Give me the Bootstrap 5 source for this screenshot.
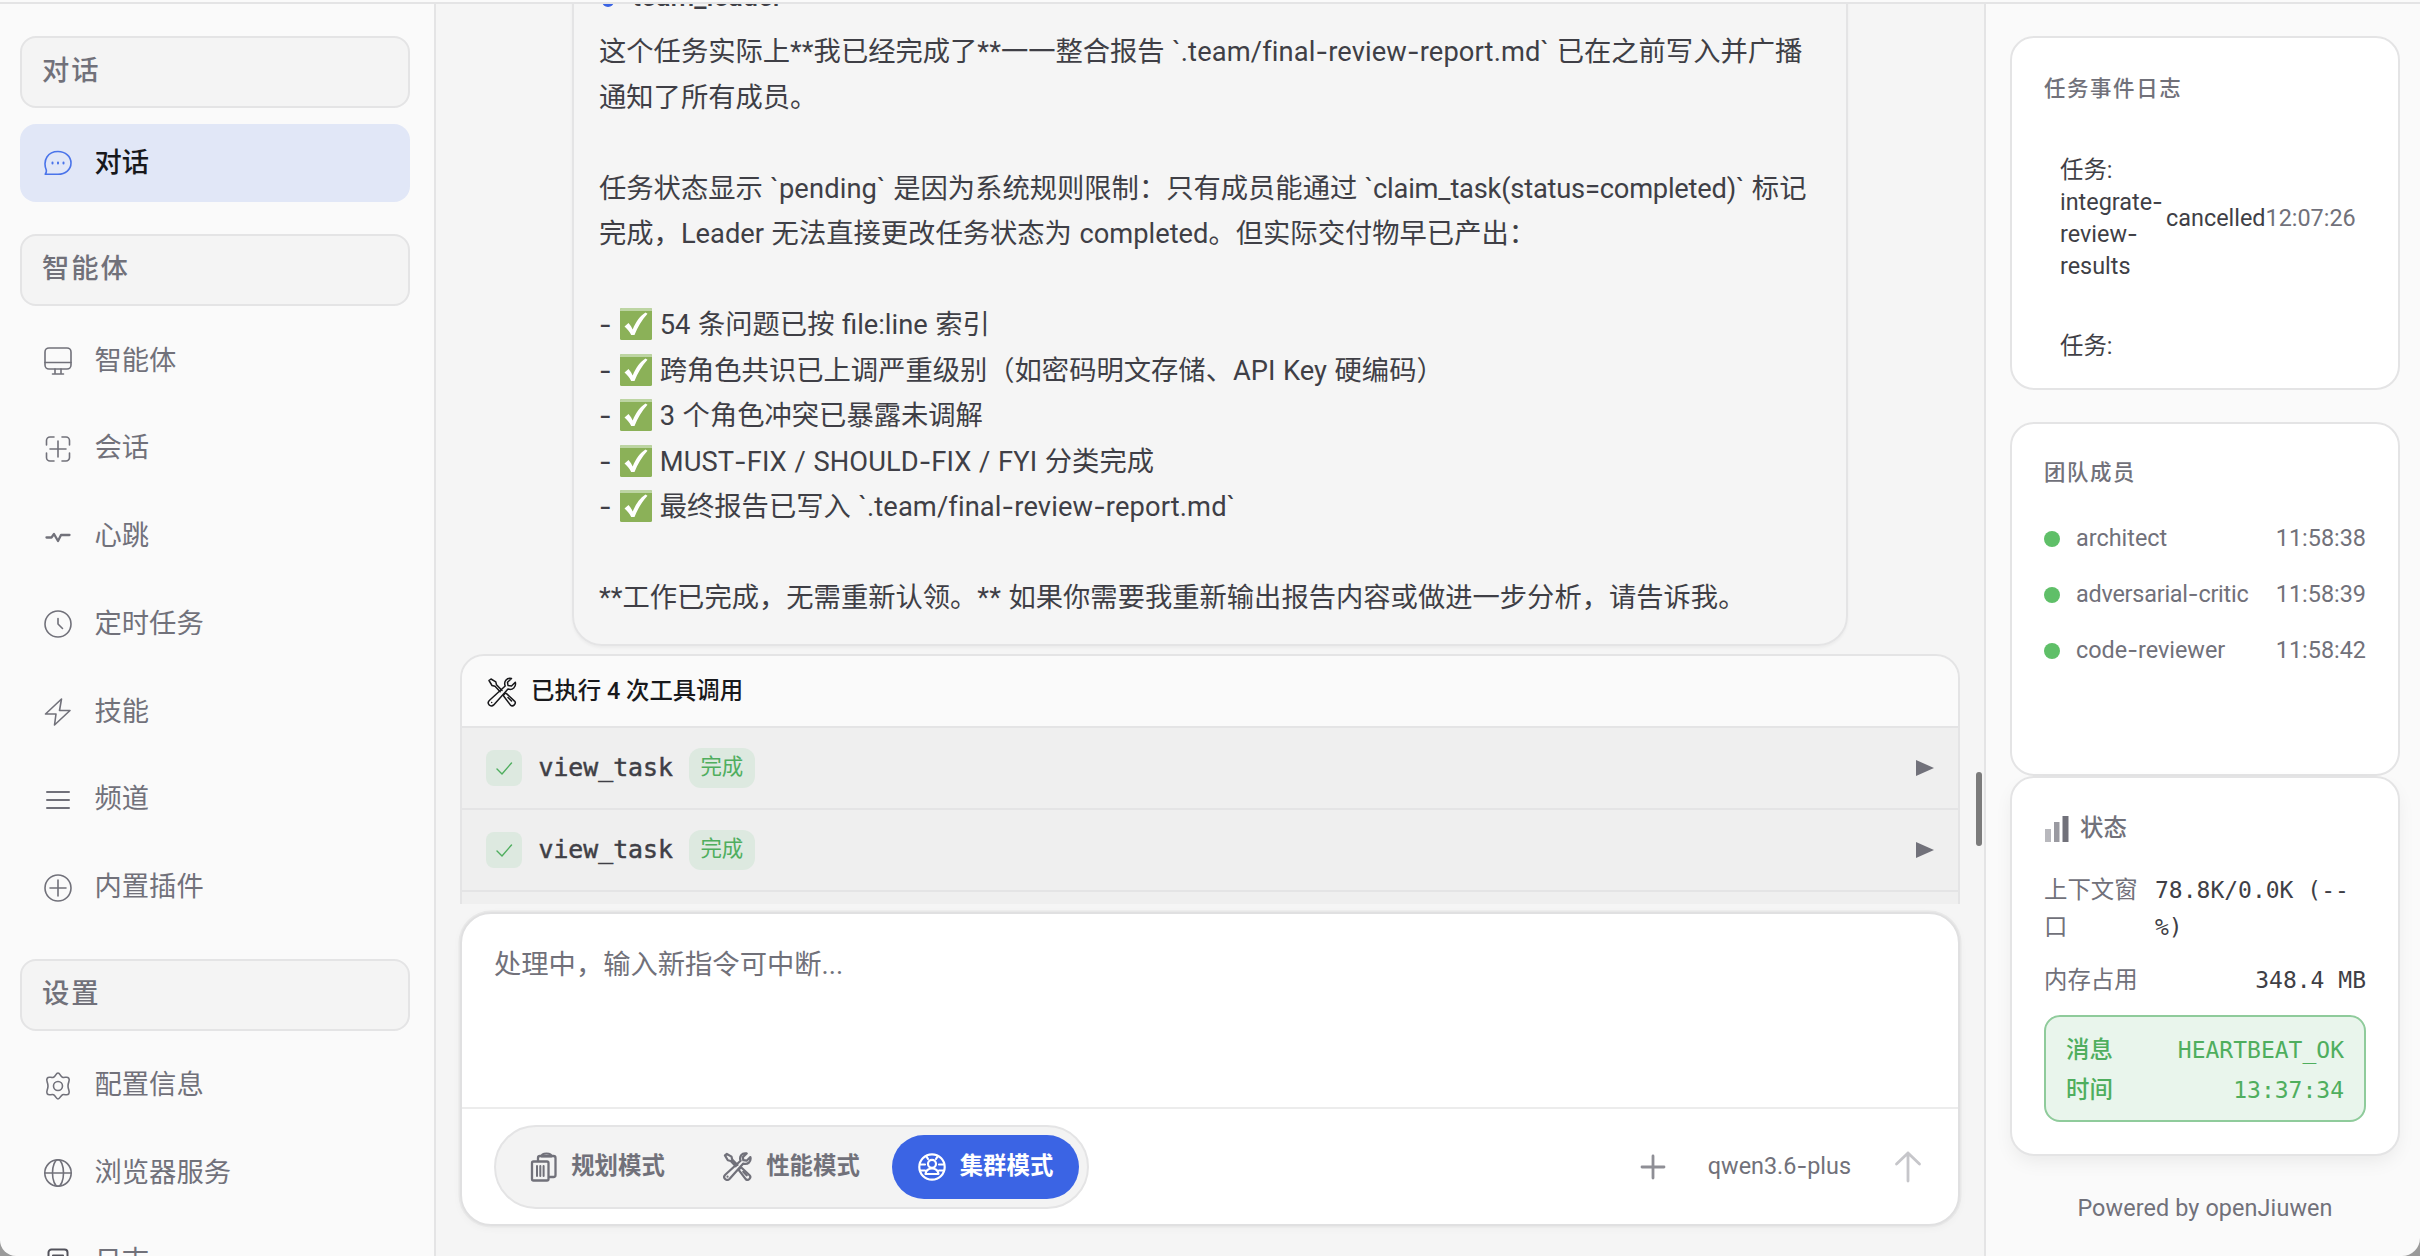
<!DOCTYPE html>
<html lang="zh-CN">
<head>
<meta charset="utf-8">
<meta name="viewport" content="width=device-width, initial-scale=1">
<title>openJiuwen</title>
<link href="https://cdn.jsdelivr.net/npm/bootstrap@5.3.0/dist/css/bootstrap.min.css" rel="stylesheet">
<style>
:root{--line:#e4e4e5;--muted:#71717a;--ink:#3f3f46;--ok:#4fae5e}
html,body{height:100%}
body{margin:0;background:#9a9a9a;font-family:Roboto,"Noto Sans CJK SC",sans-serif;font-size:27.3px;line-height:1.5;color:var(--ink);overflow:hidden}
svg{display:block;flex:none;fill:none;stroke:currentColor;stroke-linecap:round;stroke-linejoin:round}
.shell{height:1256px;background:#fafafa;padding-top:2px;border-radius:0 0 18px 16px}
.frame{border-top:2px solid var(--line);height:1254px}
.mono{font-family:"DejaVu Sans Mono","Noto Sans CJK SC",monospace}
.hy{font-family:Inter,sans-serif;line-height:1}
.soft{color:var(--muted)}
.side{width:436px;border-right:2px solid var(--line);padding:32px 24px 0 20px;flex:none}
.group-title{height:72px;border:2px solid var(--line);border-radius:16px;background:#f4f4f4;padding:0 0 1px 20px;color:var(--muted);font-weight:500;letter-spacing:1.9px;flex:none}
.menu{margin:16px 0 32px;gap:9.75px}
.menu a{height:78px;padding:0 0 0 24px;gap:22.5px;border-radius:16px;color:var(--muted);text-decoration:none;flex:none}
.menu a svg{width:28px;height:28px;stroke-width:1.6}
.menu a.current{background:#e1e7f7;color:#18181b;font-weight:500}
.menu a.current svg{color:#4a74ea}
.stage{background:#f5f5f5;padding:0 24px 0 24px;min-width:0}
.chat{height:900px}
.bubble{margin:-50px 0 0 112px;width:1276px;height:692px;border:2px solid var(--line);border-radius:30px;padding:20px 25px 0;box-shadow:0 2px 3px rgba(0,0,0,.04);flex:none}
.who{height:40px;margin-bottom:14px;font-weight:500;gap:18px;padding-left:3px}
.who i{width:12px;height:12px;border-radius:50%;background:#3b64e4;margin-top:10px}
.who span{padding-top:2px}
.words{line-height:45.5px;white-space:nowrap;word-spacing:.8px}
.words svg{display:inline-block;width:32px;height:32px;vertical-align:-6px;margin:0 0 0 1px;stroke:none}
.wide{letter-spacing:.12px}
.caps{letter-spacing:.08px}
.snug{letter-spacing:-.22px}
.tools{margin-top:8px;border:2px solid var(--line);border-radius:24px;background:#efefef;flex:none}
.tools-head{height:72px;background:#fafafa;border-bottom:2px solid var(--line);padding:2px 0 0 25px;gap:14px;font-size:23.4px;font-weight:500;color:#18181b}
.call{height:82px;border-bottom:2px solid var(--line);padding:0 24px 0 24px}
.tick{width:36px;height:36px;border-radius:8px;background:#dde9e0;color:var(--ok)}
.call .fn{font-size:24.8px;margin-left:16.5px;-webkit-text-stroke:.5px var(--ink)}
.done{margin-left:16px;height:40px;padding:0 11.5px 1px;border-radius:12px;background:#dde9e0;color:var(--ok);font-size:21.45px}
.composer{margin-top:8px;height:314px;border:2px solid #e0e0e1;border-radius:31px;background:#fff;box-shadow:0 0 0 1.5px #e8e8e8,0 2px 8px rgba(0,0,0,.04)}
.hint{height:193px;padding:31px 32px;color:var(--muted)}
.bar{border-top:2px solid #ececec;height:117px;padding:0 35px 0 32px;color:var(--muted)}
.modes{height:84px;border:2px solid var(--line);border-radius:42px;background:#f3f3f3;padding:0 8px;gap:7px}
.mode{width:187px;height:64px;border:0;border-radius:32px;background:transparent;color:var(--muted);font-size:23.4px;font-weight:700;gap:14px;padding:0}
.mode.picked{background:#3b64e4;color:#fff}
.model{font-size:23.4px;margin:0 42px 0 42px}
.info{width:436px;border-left:2px solid var(--line);padding:32px 20px 0 24px;flex:none;font-size:23.4px}
.info .mono{font-size:23px}
.panel{border:2px solid var(--line);border-radius:24px;background:#fff;flex:none;padding:0 32px}
.panel-title{font-size:21.45px;letter-spacing:1.6px;font-weight:500;color:var(--muted);line-height:32px}
.log{padding:0 10px 0 16px;line-height:32px}
.member{height:56px;color:var(--muted)}
.member i{width:16px;height:16px;border-radius:50%;background:#5fbf68;margin-right:16px}
.beat{border:2px solid #8fcb9b;background:#e9f5ec;border-radius:16px;height:107px;padding:13px 20px 0;color:var(--ok);line-height:40px}
.thumb{position:absolute;left:1976px;top:772px;width:6px;height:74px;border-radius:3px;background:#7b7b7b}
</style>
<script src="https://cdn.jsdelivr.net/npm/bootstrap@5.3.0/dist/js/bootstrap.bundle.min.js"></script>
</head>
<body>
<svg width="0" height="0" class="position-absolute">
  <symbol id="wrench" viewBox="0 0 30 30">
    <path d="M2 3.500 4 2l4.800 2.800.7 3L15 13.500M2 3.500l3 5 3 .8 5.200 5.500"/>
    <path d="M16.800 19.300c-1-1 1.500-3.800 2.700-2.700l8 7.500c2.300 2.400-1.500 6.300-4 4z"/>
    <path d="M24.500 1.500c-5-1-8 3-6.300 7.500L2.300 23.500c-3 3 1.300 7.500 4.400 4.400L21 12c4.500 1.500 8.500-2 7.300-6.800L24.500 9 21 8.500l-.5-3.200zM4.700 25.500v.1M21 20.500l3.500 3.500"/>
  </symbol>
  <symbol id="done-box" viewBox="0 0 32 32">
    <rect width="32" height="32" rx="1.500" fill="#8bb158"/><path d="M0 1.500Q0 0 1.500 0h29Q32 0 32 1.500V3H0z" fill="#bdd5a3"/>
    <path d="M4.500 18.500 8.500 15c2 2.200 3.300 4.500 4.200 6.500C16 13.500 20 8 25.500 4.500l2 1.200C22 12 17.500 19 14.500 27h-3.300C9.500 23.500 7.500 21 4.500 18.500z" fill="#fff"/>
  </symbol>
</svg>
<div class="shell overflow-hidden">
<div class="frame d-flex">

  <nav class="side d-flex flex-column overflow-hidden">
    <div class="group-title d-flex align-items-center">对话</div>
    <div class="menu d-flex flex-column">
      <a href="#" class="current d-flex align-items-center"><svg viewBox="0 0 28 28"><path d="M1.200 25.200c1.200-1.500 1.400-3 1-4.500C-1.500 11 4 2.500 14 2.500c7.500 0 13 5 13 11.500s-5.500 11.200-13 11.200z"/><path d="M8.500 13.500v1M14 13.500v1M19.500 13.500v1" stroke-width="2"/></svg>对话</a>
    </div>
    <div class="group-title d-flex align-items-center">智能体</div>
    <div class="menu d-flex flex-column">
      <a href="#" class="d-flex align-items-center"><svg viewBox="0 0 28 28"><rect x="1" y="1" width="26" height="21" rx="4"/><path d="M1 15.500h26M11 22v4M17 22v4M8.500 27h11"/></svg>智能体</a>
      <a href="#" class="d-flex align-items-center"><svg viewBox="0 0 28 28"><path d="M2.500 10V5.500a3.500 3.500 0 0 1 3.500-3.500h4M18 2h4a3.500 3.500 0 0 1 3.500 3.500V10M25.500 18v4.500a3.500 3.500 0 0 1-3.500 3.500h-4M10 26H6a3.500 3.500 0 0 1-3.500-3.500V18M14 6v16M6 14h16"/></svg>会话</a>
      <a href="#" class="d-flex align-items-center"><svg viewBox="0 0 28 28"><path d="M2.500 14.500h5l2.500-3.500 4 7 3-6h8.500" stroke-width="2.300"/></svg>心跳</a>
      <a href="#" class="d-flex align-items-center"><svg viewBox="0 0 28 28"><circle cx="14" cy="14" r="13"/><path d="M14 8.500V14l4.500 4.500"/></svg>定时任务</a>
      <a href="#" class="d-flex align-items-center"><svg viewBox="0 0 28 28"><path d="M17.500 1 1.500 16h10.500l-1.500 11L26 12.500H15.500z"/></svg>技能</a>
      <a href="#" class="d-flex align-items-center"><svg viewBox="0 0 28 28"><path d="M3 6h22M3 14h22M3 22h22" stroke-width="2"/></svg>频道</a>
      <a href="#" class="d-flex align-items-center"><svg viewBox="0 0 28 28"><circle cx="14" cy="14" r="13"/><path d="M14 6v16M6 14h16"/></svg>内置插件</a>
    </div>
    <div class="group-title d-flex align-items-center">设置</div>
    <div class="menu d-flex flex-column">
      <a href="#" class="d-flex align-items-center"><svg viewBox="0 0 28 28"><path d="M14 1c2 0 2.500 3.500 4.500 4.300S23.300 4 24.800 6.200s-.8 3.800-.8 7.800 2.300 5.500.8 7.800-4.300 0-6.300.9S16 27 14 27s-2.500-3.500-4.500-4.300-4.800 1.400-6.300-.9.800-3.800.8-7.800-2.300-5.500-.8-7.800 4.300 0 6.300-.9S12 1 14 1z"/><circle cx="14" cy="14" r="4.500"/></svg>配置信息</a>
      <a href="#" class="d-flex align-items-center"><svg viewBox="0 0 28 28"><circle cx="14" cy="14" r="13.200"/><ellipse cx="14" cy="14" rx="5.500" ry="13.200"/><path d="M1 14h26"/></svg>浏览器服务</a>
      <a href="#" class="d-flex align-items-center"><svg viewBox="0 0 28 28"><path d="M7.500 2.500h13a3 3 0 0 1 3 3v18a3 3 0 0 1-3 3h-13a3 3 0 0 1-3-3v-18a3 3 0 0 1 3-3zM9 8.500h10M9 14h10" stroke="#52525b" stroke-width="2"/></svg>日志</a>
    </div>
  </nav>

  <main class="stage flex-grow-1">
    <section class="chat d-flex flex-column overflow-hidden">
      <article class="bubble">
        <div class="who d-flex align-items-center"><i></i><span>team_leader</span></div>
        <div class="words">
          这个任务实际上**我已经完成了**一一整合报告 <span class="wide">`.team/final<span class="hy">-</span>review<span class="hy">-</span>report.md`</span> 已在之前写入并广播<br>
          通知了所有成员。<br><br>
          任务状态显示 <span class="wide">`pending`</span> 是因为系统规则限制：只有成员能通过 <span class="snug">`claim_task(status=completed)`</span> 标记<br>
          完成，Leader 无法直接更改任务状态为 completed。但实际交付物早已产出：<br><br>
          <span class="hy">-</span> <svg><use href="#done-box"/></svg> 54 条问题已按 file:line 索引<br>
          <span class="hy">-</span> <svg><use href="#done-box"/></svg> 跨角色共识已上调严重级别（如密码明文存储、API Key 硬编码）<br>
          <span class="hy">-</span> <svg><use href="#done-box"/></svg> 3 个角色冲突已暴露未调解<br>
          <span class="hy">-</span> <svg><use href="#done-box"/></svg> <span class="caps">MUST<span class="hy">-</span>FIX / SHOULD<span class="hy">-</span>FIX / FYI</span> 分类完成<br>
          <span class="hy">-</span> <svg><use href="#done-box"/></svg> 最终报告已写入 <span class="wide">`.team/final<span class="hy">-</span>review<span class="hy">-</span>report.md`</span><br><br>
          **工作已完成，无需重新认领。** 如果你需要我重新输出报告内容或做进一步分析，请告诉我。
        </div>
      </article>
      <section class="tools overflow-hidden">
        <div class="tools-head d-flex align-items-center"><svg width="30" height="30" stroke-width="1.500"><use href="#wrench"/></svg>已执行 4 次工具调用</div>
        <div class="call d-flex align-items-center"><span class="tick d-flex align-items-center justify-content-center"><svg width="20" height="20" viewBox="0 0 20 20" stroke-width="1.400"><path d="M3 11l5 5 9.500-11"/></svg></span><span class="fn mono">view_task</span><span class="done d-flex align-items-center">完成</span><svg class="ms-auto" width="18" height="18" viewBox="0 0 18 18"><path d="M0 1 18 9 0 17z" fill="#71717a" stroke="none"/></svg></div>
        <div class="call d-flex align-items-center"><span class="tick d-flex align-items-center justify-content-center"><svg width="20" height="20" viewBox="0 0 20 20" stroke-width="1.400"><path d="M3 11l5 5 9.500-11"/></svg></span><span class="fn mono">view_task</span><span class="done d-flex align-items-center">完成</span><svg class="ms-auto" width="18" height="18" viewBox="0 0 18 18"><path d="M0 1 18 9 0 17z" fill="#71717a" stroke="none"/></svg></div>
        <div class="call"></div>
      </section>
    </section>

    <section class="composer">
      <div class="hint">处理中，输入新指令可中断...</div>
      <div class="bar d-flex align-items-center">
        <div class="modes d-flex align-items-center">
          <button class="mode d-flex align-items-center justify-content-center"><svg width="27" height="30" viewBox="0 0 27 30" stroke-width="2.300"><rect x="2" y="9.500" width="16.500" height="19" rx="1.500"/><path d="M8 9V6a2 2 0 0 1 2-2h13.500a2 2 0 0 1 2 2v17a2 2 0 0 1-2 2h-4"/><path d="M11.500 4.500c0-2 2-3 5-3s5 1 5 3zM7 14v10M10.300 14v10M13.600 14v10" stroke-width="2"/></svg>规划模式</button>
          <button class="mode d-flex align-items-center justify-content-center"><svg width="29" height="29" stroke-width="2.300"><use href="#wrench"/></svg>性能模式</button>
          <button class="mode picked d-flex align-items-center justify-content-center"><svg width="28" height="28" viewBox="0 0 28 28" stroke-width="2.200"><circle cx="14" cy="14" r="12.700"/><circle cx="14" cy="10.800" r="4"/><path d="M7.500 21c.5-3.500 3-5.500 6.500-5.500s6 2 6.500 5.500zM2 11.500h5M21 11.500h5M2.500 17.500H7M21 17.500h4.500M8.500 3.500 10 6M19.500 3.500 18 6"/></svg>集群模式</button>
        </div>
        <svg class="ms-auto" width="26" height="26" viewBox="0 0 26 26" stroke-width="2.800" style="color:#8f8f96"><path d="M13 2v22M2 13h22"/></svg>
        <span class="model">qwen3.6<span class="hy">-</span>plus</span>
        <svg width="30" height="32" viewBox="0 0 30 32" stroke-width="2.800" style="color:#c6c6ca"><path d="M15 2v28M3.500 13 15 2l11.500 11"/></svg>
      </div>
    </section>
  </main>

  <aside class="info d-flex flex-column">
    <section class="panel overflow-hidden" style="height:354px">
      <div class="panel-title" style="margin-top:35px">任务事件日志</div>
      <div class="log d-flex align-items-center" style="margin-top:49px"><span class="flex-shrink-0" style="width:106px">任务:<br>integrate<span class="hy">-</span><br>review<span class="hy">-</span><br>results</span><span>cancelled</span><span class="soft">12:07:26</span></div>
      <div class="log" style="margin-top:48px">任务:</div>
    </section>
    <section class="panel" style="height:354px;margin-top:32px">
      <div class="panel-title" style="margin:32.500px 0 22px">团队成员</div>
      <div class="member d-flex align-items-center"><i></i><span>architect</span><span class="ms-auto">11:58:38</span></div>
      <div class="member d-flex align-items-center"><i></i><span class="snug">adversarial<span class="hy">-</span>critic</span><span class="ms-auto">11:58:39</span></div>
      <div class="member d-flex align-items-center"><i></i><span>code<span class="hy">-</span>reviewer</span><span class="ms-auto">11:58:42</span></div>
    </section>
    <section class="panel" style="height:380px;box-shadow:0 8px 20px -4px rgba(0,0,0,.08)">
      <div class="soft d-flex align-items-center fw-medium" style="margin-top:33px;height:36px;gap:10px"><svg width="26" height="26" viewBox="0 0 26 26"><g stroke="none"><path d="M1 13h6v13H1z" fill="#b8b8bd"/><path d="M10 6h5.500v20H10z" fill="#9a9aa1"/><path d="M18.500 0h6v26h-6z" fill="#71717a"/></g></svg>状态</div>
      <div class="d-flex" style="margin-top:25px;line-height:37px"><span class="soft flex-shrink-0" style="width:111px">上下文窗<br>口</span><span class="mono">78.8K/0.0K (--<br>%)</span></div>
      <div class="d-flex justify-content-between" style="margin-top:15.500px;line-height:37px"><span class="soft">内存占用</span><span class="mono">348.4 MB</span></div>
      <div class="beat" style="margin-top:16px">
        <div class="d-flex justify-content-between"><span class="fw-medium">消息</span><span class="mono">HEARTBEAT_OK</span></div>
        <div class="d-flex justify-content-between"><span class="fw-medium">时间</span><span class="mono">13:37:34</span></div>
      </div>
    </section>
    <footer class="text-center soft" style="margin-top:35px;letter-spacing:.1px">Powered by openJiuwen</footer>
  </aside>
</div>
</div>
<div class="thumb"></div>
</body>
</html>
